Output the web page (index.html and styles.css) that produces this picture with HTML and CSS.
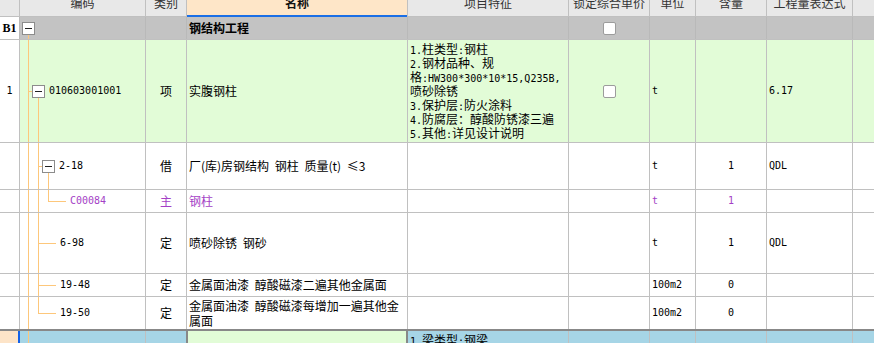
FILE: index.html
```html
<!DOCTYPE html>
<html lang="zh-CN">
<head>
<meta charset="utf-8">
<title>清单定额</title>
<link rel="stylesheet" href="styles.css">
</head>
<body>
<div class="grid">
  <div class="row head">
    <div class="c"></div>
    <div class="c ctr">编码</div>
    <div class="c ctr">类别</div>
    <div class="c ctr hn">名称</div>
    <div class="c ctr">项目特征</div>
    <div class="c ctr">锁定综合单价</div>
    <div class="c ctr">单位</div>
    <div class="c ctr">含量</div>
    <div class="c ctr">工程量表达式</div>
    <div class="c"></div>
  </div>

  <div class="row grp h22">
    <div class="c rh ctr b1">B1</div>
    <div class="c code tr-b"><span class="tg"></span></div>
    <div class="c"></div>
    <div class="c nm bold">钢结构工程</div>
    <div class="c"></div>
    <div class="c ctr"><span class="cb"></span></div>
    <div class="c"></div>
    <div class="c"></div>
    <div class="c"></div>
    <div class="c"></div>
  </div>

  <div class="row g h102">
    <div class="c rh ctr m">1</div>
    <div class="c code tr-1"><span class="tg"></span><span class="m ct">010603001001</span></div>
    <div class="c ctr">项</div>
    <div class="c nm">实腹钢柱</div>
    <div class="c ft">
      <div><span class="m">1.</span>柱类型<span class="m">:</span>钢柱</div>
      <div><span class="m">2.</span>钢材品种、规</div>
      <div>格<span class="m">:HW300*300*10*15,Q235B,</span></div>
      <div>喷砂除锈</div>
      <div><span class="m">3.</span>保护层<span class="m">:</span>防火涂料</div>
      <div><span class="m">4.</span>防腐层：醇酸防锈漆三遍</div>
      <div><span class="m">5.</span>其他<span class="m">:</span>详见设计说明</div>
    </div>
    <div class="c ctr"><span class="cb"></span></div>
    <div class="c m">t</div>
    <div class="c"></div>
    <div class="c m">6.17</div>
    <div class="c"></div>
  </div>

  <div class="row w h46">
    <div class="c rh"></div>
    <div class="c code tr-2"><span class="tg"></span><span class="m ct">2-18</span></div>
    <div class="c ctr">借</div>
    <div class="c nm">厂(库)房钢结构 钢柱 质量(t) ≤3</div>
    <div class="c"></div>
    <div class="c"></div>
    <div class="c m">t</div>
    <div class="c ctr m">1</div>
    <div class="c m">QDL</div>
    <div class="c"></div>
  </div>

  <div class="row w p h22">
    <div class="c rh"></div>
    <div class="c code tr-3"><span class="m">C00084</span></div>
    <div class="c ctr">主</div>
    <div class="c nm">钢柱</div>
    <div class="c"></div>
    <div class="c"></div>
    <div class="c m">t</div>
    <div class="c ctr m">1</div>
    <div class="c"></div>
    <div class="c"></div>
  </div>

  <div class="row w h60">
    <div class="c rh"></div>
    <div class="c code tr-4"><span class="m">6-98</span></div>
    <div class="c ctr">定</div>
    <div class="c nm">喷砂除锈 钢砂</div>
    <div class="c"></div>
    <div class="c"></div>
    <div class="c m">t</div>
    <div class="c ctr m">1</div>
    <div class="c m">QDL</div>
    <div class="c"></div>
  </div>

  <div class="row w h22">
    <div class="c rh"></div>
    <div class="c code tr-4"><span class="m">19-48</span></div>
    <div class="c ctr">定</div>
    <div class="c nm">金属面油漆 醇酸磁漆二遍其他金属面</div>
    <div class="c"></div>
    <div class="c"></div>
    <div class="c m">100m2</div>
    <div class="c ctr m">0</div>
    <div class="c"></div>
    <div class="c"></div>
  </div>

  <div class="row w h32">
    <div class="c rh"></div>
    <div class="c code tr-5"><span class="m">19-50</span></div>
    <div class="c ctr">定</div>
    <div class="c nm wrap"><div>金属面油漆 醇酸磁漆每增加一遍其他金</div><div>属面</div></div>
    <div class="c"></div>
    <div class="c"></div>
    <div class="c m">100m2</div>
    <div class="c ctr m">0</div>
    <div class="c"></div>
    <div class="c"></div>
  </div>

  <div class="row sel">
    <div class="c rh"></div>
    <div class="c code tr-6"></div>
    <div class="c"></div>
    <div class="c nm"></div>
    <div class="c ft top"><div><span class="m">1.</span>梁类型<span class="m">:</span>钢梁</div></div>
    <div class="c"></div>
    <div class="c"></div>
    <div class="c"></div>
    <div class="c"></div>
    <div class="c"></div>
  </div>
</div>
</body>
</html>
```

FILE: styles.css
```css
* { box-sizing: border-box; }
html, body { margin: 0; padding: 0; }
body {
  width: 874px;
  height: 343px;
  overflow: hidden;
  background: #fff;
  font-family: "Noto Sans CJK SC", sans-serif;
  font-size: 12px;
  color: #000;
}

.grid {
  display: flex;
  flex-direction: column;
  gap: 1px;
  background-color: #c0c0c0;
}

.row {
  display: grid;
  grid-template-columns: 19px 125px 40px 220px 160px 80px 45px 70px 85px 1fr;
  column-gap: 1px;
}

.c {
  display: flex;
  align-items: center;
  min-width: 0;
  overflow: hidden;
  white-space: nowrap;
  padding: 0 2px;
  line-height: 14px;
}
.ctr { justify-content: center; }

.m {
  font-family: "DejaVu Sans Mono", monospace;
  font-size: 10px;
}

/* row heights */
.head { height: 16px; }
.h22 { height: 22px; }
.h32 { height: 32px; }
.h46 { height: 46px; }
.h60 { height: 60px; }
.h102 { height: 102px; }

/* header */
.head .c {
  background-color: #e8e8e8;
  color: #333;
  align-items: flex-start;
  line-height: 6px;
}
.head .hn {
  background-color: #fee6c8;
  color: #111;
  font-weight: bold;
  box-shadow: inset 0 -1px #1b6fe6, 0 1px #1b6fe6;
}

/* group row */
.row.grp { background-color: #b9b9b9; }
.grp .c { background-color: #c3c3c3; }
.grp .rh { background-color: #fff; }
.b1 {
  font-family: "Liberation Serif", serif;
  font-weight: bold;
  font-size: 12px;
  padding: 0;
}
.bold { font-weight: bold; }

/* body rows */
.g .c { background-color: #e2fcd7; }
.w .c { background-color: #fff; }
.rh { background-color: #fff; padding: 0; }
.g .rh { background-color: #fff; }
.p .c { color: #a43fc6; }

.nm { word-spacing: 3px; }
.nm.wrap {
  flex-direction: column;
  justify-content: center;
  align-items: flex-start;
}
.nm.wrap > div { height: 15px; line-height: 15px; }

.ft {
  flex-direction: column;
  justify-content: center;
  align-items: flex-start;
}
.ft > div { height: 14px; line-height: 14px; }
.ft.top { justify-content: flex-start; padding-top: 2px; }

.cb {
  width: 13px;
  height: 13px;
  border: 1px solid #9c9c9c;
  border-radius: 2px;
  background-color: #fff;
}

/* tree */
.code {
  --tl: linear-gradient(#fdc77b, #fdc77b);
  background-repeat: no-repeat;
  padding: 0;
}
.tg {
  flex: none;
  width: 13px;
  height: 13px;
  border: 1px solid #8c8c8c;
  background-color: #fff;
  display: flex;
  align-items: center;
  justify-content: center;
}
.tg::before {
  content: "";
  width: 7px;
  height: 1px;
  background-color: #222;
}
.ct { margin-left: 4px; }

.tr-b {
  padding-left: 2px;
  background-image: var(--tl);
  background-position: 8px 100%;
  background-size: 1px 50%;
}
.tr-1 {
  padding-left: 12px;
  background-image: var(--tl), var(--tl), var(--tl);
  background-position: 8px 0, 8px 50%, 18px 100%;
  background-size: 1px 100%, 5px 1px, 1px 50%;
}
.tr-2 {
  padding-left: 22px;
  background-image: var(--tl), var(--tl), var(--tl), var(--tl);
  background-position: 8px 0, 18px 0, 18px 50%, 28px 100%;
  background-size: 1px 100%, 1px 100%, 5px 1px, 1px 50%;
}
.tr-3 {
  padding-left: 50px;
  background-image: var(--tl), var(--tl), var(--tl), var(--tl);
  background-position: 8px 0, 18px 0, 28px 0, 28px 50%;
  background-size: 1px 100%, 1px 100%, 1px 50%, 18px 1px;
}
.tr-4 {
  padding-left: 40px;
  background-image: var(--tl), var(--tl), var(--tl);
  background-position: 8px 0, 18px 0, 18px 50%;
  background-size: 1px 100%, 1px 100%, 18px 1px;
}
.tr-5 {
  padding-left: 40px;
  background-image: var(--tl), var(--tl), var(--tl);
  background-position: 8px 0, 18px 0, 18px 50%;
  background-size: 1px 100%, 1px 50%, 18px 1px;
}
.tr-6 {
  background-image: var(--tl);
  background-position: 8px 0;
  background-size: 1px 100%;
}

/* selected (last) row */
.row.sel {
  margin-top: -1px;
  border-top: 2px solid #888;
  height: 40px;
}
.sel .c { background-color: #a6d5e6; }
.sel .rh {
  background-color: #fde4c8;
  box-shadow: inset -1px 0 #1462e8, 1px 0 #1462e8;
}
.sel .nm {
  background-color: #e2fcd7;
  box-shadow: inset 1px 0 #888, inset -1px 0 #888, -1px 0 #888, 1px 0 #888;
}
```
